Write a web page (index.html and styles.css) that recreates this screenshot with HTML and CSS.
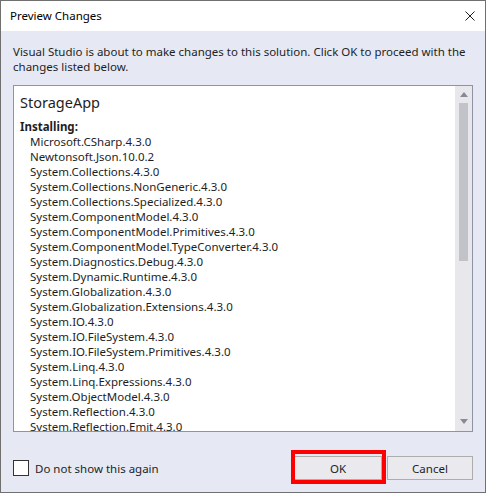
FILE: index.html
```html
<!DOCTYPE html>
<html>
<head>
<meta charset="utf-8">
<title>Preview Changes</title>
<link rel="stylesheet" href="styles.css">
</head>
<body>
<div class="window">
  <div class="titlebar">
    <span class="title">Preview Changes</span>
    <svg class="close" width="10" height="10" viewBox="0 0 10 10"><path d="M0.5 0.5 L9.5 9.5 M9.5 0.5 L0.5 9.5" stroke="#1e1e1e" stroke-width="1" fill="none"/></svg>
  </div>
  <div class="content">
    <p class="desc">Visual Studio is about to make changes to this solution. Click OK to proceed with the changes listed below.</p>
    <div class="listbox">
      <div class="list">
        <div class="project">StorageApp</div>
        <div class="section">Installing:</div>
        <ul class="items">
          <li>Microsoft.CSharp.4.3.0</li>
          <li>Newtonsoft.Json.10.0.2</li>
          <li>System.Collections.4.3.0</li>
          <li>System.Collections.NonGeneric.4.3.0</li>
          <li>System.Collections.Specialized.4.3.0</li>
          <li>System.ComponentModel.4.3.0</li>
          <li>System.ComponentModel.Primitives.4.3.0</li>
          <li>System.ComponentModel.TypeConverter.4.3.0</li>
          <li>System.Diagnostics.Debug.4.3.0</li>
          <li>System.Dynamic.Runtime.4.3.0</li>
          <li>System.Globalization.4.3.0</li>
          <li>System.Globalization.Extensions.4.3.0</li>
          <li>System.IO.4.3.0</li>
          <li>System.IO.FileSystem.4.3.0</li>
          <li>System.IO.FileSystem.Primitives.4.3.0</li>
          <li>System.Linq.4.3.0</li>
          <li>System.Linq.Expressions.4.3.0</li>
          <li>System.ObjectModel.4.3.0</li>
          <li>System.Reflection.4.3.0</li>
          <li>System.Reflection.Emit.4.3.0</li>
        </ul>
      </div>
      <div class="scrollbar">
        <span class="arrow up"></span>
        <span class="thumb"></span>
        <span class="arrow down"></span>
      </div>
    </div>
    <div class="footer">
      <label class="check"><span class="box"></span><span>Do not show this again</span></label>
      <div class="buttons">
        <button class="btn ok">OK</button>
        <button class="btn cancel">Cancel</button>
      </div>
    </div>
  </div>
</div>
</body>
</html>
```
FILE: styles.css
```css
* { box-sizing: border-box; }
html, body { margin: 0; padding: 0; }
body {
  width: 486px;
  height: 493px;
  font-family: "Noto Sans", "Open Sans", sans-serif;
  font-size: 11.5px;
  color: #1e1e1e;
  background: #ffffff;
}
.window {
  width: 486px;
  height: 493px;
  border: 1px solid #707070;
  display: flex;
  flex-direction: column;
}
.titlebar {
  height: 30px;
  flex: none;
  background: #ffffff;
  display: flex;
  align-items: center;
  justify-content: space-between;
  padding: 0 10px 1px 9px;
}
.title { font-size: 11.5px; color: #000; }
.close { display: block; }
.content {
  flex: 1;
  background: #e6e9f4;
  padding: 13px 12px 12px 12px;
  display: flex;
  flex-direction: column;
}
.desc {
  margin: 0;
  line-height: 15px;
}
.listbox {
  margin-top: 11px;
  height: 347px;
  flex: none;
  background: #ffffff;
  border: 1px solid #8e93a8;
  display: flex;
  overflow: hidden;
}
.list {
  flex: 1;
  padding: 6px 0 0 6px;
  overflow: hidden;
}
.project {
  font-size: 14.5px;
  line-height: 20px;
  margin-bottom: 7px;
}
.section {
  font-weight: bold;
  line-height: 15px;
}
.items {
  list-style: none;
  margin: 0;
  padding: 0 0 0 10px;
  line-height: 15px;
}
.scrollbar {
  width: 17px;
  background: #e8e8ec;
  display: flex;
  flex-direction: column;
  align-items: center;
  padding: 6px 0 7px 0;
}
.arrow {
  width: 0;
  height: 0;
  border-left: 4.5px solid transparent;
  border-right: 4.5px solid transparent;
}
.arrow.up { border-bottom: 5px solid #868999; }
.arrow.down { border-top: 5px solid #868999; margin-top: auto; }
.thumb {
  width: 9px;
  height: 158px;
  margin-top: 6px;
  background: #c2c3c9;
}
.footer {
  margin-top: 24px;
  height: 24px;
  display: flex;
  align-items: center;
  justify-content: space-between;
}
.check {
  display: flex;
  align-items: center;
  gap: 6px;
}
.box {
  width: 16px;
  height: 16px;
  border: 1px solid #333333;
  background: #ffffff;
}
.buttons {
  display: flex;
  gap: 5px;
}
.btn {
  height: 24px;
  font-family: inherit;
  font-size: 11.5px;
  color: #1e1e1e;
  background: #e9e9ee;
  border: 1px solid #adadad;
  padding: 0;
}
.ok {
  width: 88px;
  position: relative;
}
.ok::after {
  content: "";
  position: absolute;
  left: -4px;
  top: -7px;
  right: -5px;
  bottom: -5px;
  border: 4px solid #ff0000;
}
.cancel { width: 86px; }
```
